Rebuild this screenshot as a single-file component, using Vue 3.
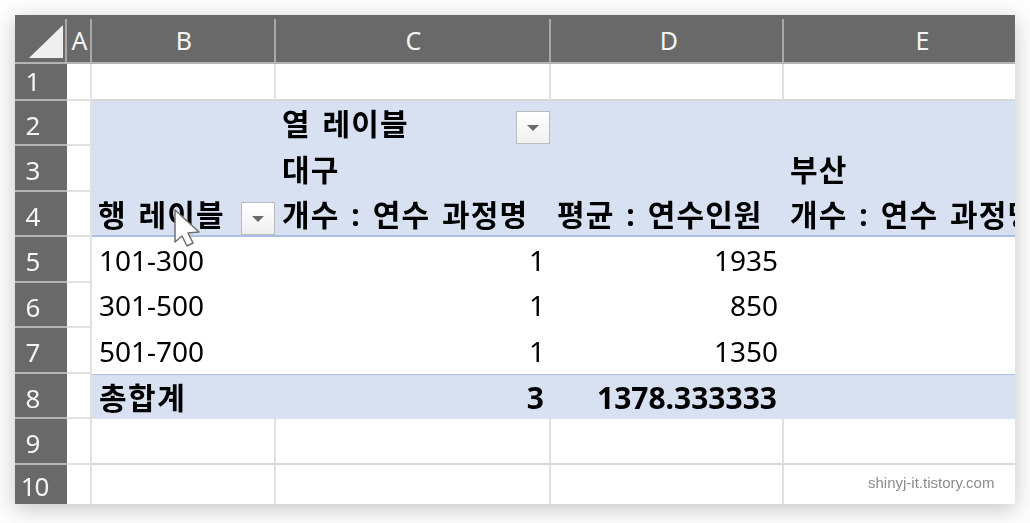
<script setup>
const colHeads = ['A', 'B', 'C', 'D', 'E']
const rows = [
  { n: 1, cells: ['', '', '', ''], kind: 'plain' },
  { n: 2, cells: ['', '열 레이블', '', ''], kind: 'head', filter: 1 },
  { n: 3, cells: ['', '대구', '', '부산'], kind: 'head' },
  { n: 4, cells: ['행 레이블', '개수 : 연수 과정명', '평균 : 연수인원', '개수 : 연수 과정명'], kind: 'head last', filter: 0 },
  { n: 5, cells: ['101-300', '1', '1935', ''], kind: 'data' },
  { n: 6, cells: ['301-500', '1', '850', ''], kind: 'data' },
  { n: 7, cells: ['501-700', '1', '1350', ''], kind: 'data' },
  { n: 8, cells: ['총합계', '3', '1378.333333', ''], kind: 'total' },
  { n: 9, cells: ['', '', '', ''], kind: 'plain' },
  { n: 10, cells: ['', '', '', ''], kind: 'plain end' }
]
const isNum = (r, i) => (r.kind === 'data' || r.kind === 'total') && i > 0
</script>

<template>
  <div class="page">
    <div class="sheet">
      <div class="corner"><svg class="tri" width="36" height="35" viewBox="0 0 36 35"><path d="M35 1V34H1Z" fill="#efefef" /></svg></div>
      <div v-for="c in colHeads" :key="c" class="col-head" :class="'col-' + c">{{ c }}</div>
      <template v-for="r in rows" :key="r.n">
        <div class="row-head" :class="'row-' + r.n">{{ r.n }}</div>
        <div class="cell a" :class="r.n === 10 ? 'end' : ''"></div>
        <div
          v-for="(t, i) in r.cells"
          :key="i"
          class="cell"
          :class="[r.kind, { num: isNum(r, i), clip: i === 3 }]"
        >
          <span class="txt">{{ t }}</span>
          <span v-if="r.filter === i" class="filter"><i class="arrow"></i></span>
        </div>
      </template>
      <svg class="cursor" width="30" height="40" viewBox="0 0 30 40">
        <path d="M1 1V33L8 27L13 37L19 34L14 24L25 23Z" fill="#fff" stroke="#707070" stroke-width="1.500" stroke-linejoin="round" />
      </svg>
      <span class="mark">shinyj-it.tistory.com</span>
    </div>
  </div>
</template>

<style>
html, body { margin: 0; background: #fff; }
</style>

<style scoped>
.page {
  width: 1030px;
  height: 523px;
  padding: 15px 15px 19px;
  box-sizing: border-box;
  background: #fdfdfd;
  overflow: hidden;
}
.sheet {
  position: relative;
  width: 1000px;
  height: 489px;
  display: grid;
  grid-template-columns: 52px 25px 184px 275px 233px 231px;
  grid-template-rows: 49px 37px 45px 46px 45px 46px 45px 46px 45px 46px 39px;
  background: #fff;
  box-shadow: 0 5px 20px rgba(0, 0, 0, 0.22);
  overflow: hidden;
  font-family: "Noto Sans", "Noto Sans CJK KR", sans-serif;
  filter: blur(0.4px);
}
.corner {
  background: #696969;
  border-bottom: 2px solid #b4b4b4;
  box-sizing: border-box;
  display: flex;
  align-items: flex-end;
  justify-content: flex-end;
  padding: 0 3px 3px 0;
  position: relative;
}
.corner::after,
.col-head::after {
  content: "";
  position: absolute;
  top: 4px;
  bottom: 0;
  right: 0;
  width: 2px;
  background: #a8a8a8;
}
.tri { display: block; }
.col-head {
  position: relative;
  background: #696969;
  color: #f4f4f4;
  font-size: 25px;
  line-height: 50px;
  text-align: center;
  border-bottom: 2px solid #b4b4b4;
  box-sizing: border-box;
}
.col-D { padding-left: 3px; }
.col-E { padding-left: 46px; }
.col-E::after { display: none; }
.row-head {
  background: #696969;
  color: #f4f4f4;
  font-size: 26px;
  line-height: 45px;
  border-bottom: 2px solid #b4b4b4;
  box-sizing: border-box;
  display: flex;
  align-items: flex-start;
  justify-content: center;
  padding-right: 16px;
  padding-top: 2px;
}
.row-1 { padding-top: 0; line-height: 35px; }
.row-10 { border-bottom: 0; padding-top: 3px; line-height: 36px; padding-right: 13px; letter-spacing: -1px; }
.cell {
  position: relative;
  box-sizing: border-box;
  border-right: 2px solid #e1e1e1;
  border-bottom: 2px solid #e1e1e1;
  color: #000;
  font-size: 28px;
  line-height: 45px;
  padding: 2px 4px 0 7px;
  white-space: nowrap;
  overflow: hidden;
  display: flex;
  align-items: center;
}
.cell.a { padding: 0; }
.cell.clip { border-right: 0; }
.cell.plain { border-bottom-color: #d8d8d8; }
.cell.end { border-bottom: 0; }
.cell.head { background: #d8e1f1; border-color: #d8e1f1; border-right: 0; font-weight: 700; font-size: 30px; letter-spacing: 1.100px; word-spacing: 3px; padding-left: 6px; }
.cell.head:nth-child(n) .txt { display: block; }
.cell.last { border-bottom: 2px solid #a9bfe3; }
.cell.data { border-color: #fff; }
.cell.total { background: #d8e1f1; border-color: #d8e1f1; border-right: 0; border-top: 1px solid #a9bfe3; font-weight: 700; font-size: 30px; letter-spacing: 1.500px; }
.cell.total.num { letter-spacing: 0; padding-right: 7px; }
.cell.num { justify-content: flex-end; }
.filter {
  position: absolute;
  right: 1px;
  bottom: 0;
  width: 34px;
  height: 33px;
  box-sizing: border-box;
  border: 1px solid #bbbbbb;
  background: linear-gradient(#ffffff, #f0f0f0);
  display: flex;
  align-items: center;
  justify-content: center;
}
.arrow {
  width: 0;
  height: 0;
  border-left: 6px solid transparent;
  border-right: 6px solid transparent;
  border-top: 6px solid #6a6a6a;
}
.cursor {
  position: absolute;
  left: 159px;
  top: 194px;
}
.mark {
  position: absolute;
  left: 853px;
  top: 459px;
  font-family: "Liberation Sans", sans-serif;
  font-size: 15px;
  color: #8c8c8c;
}
</style>
